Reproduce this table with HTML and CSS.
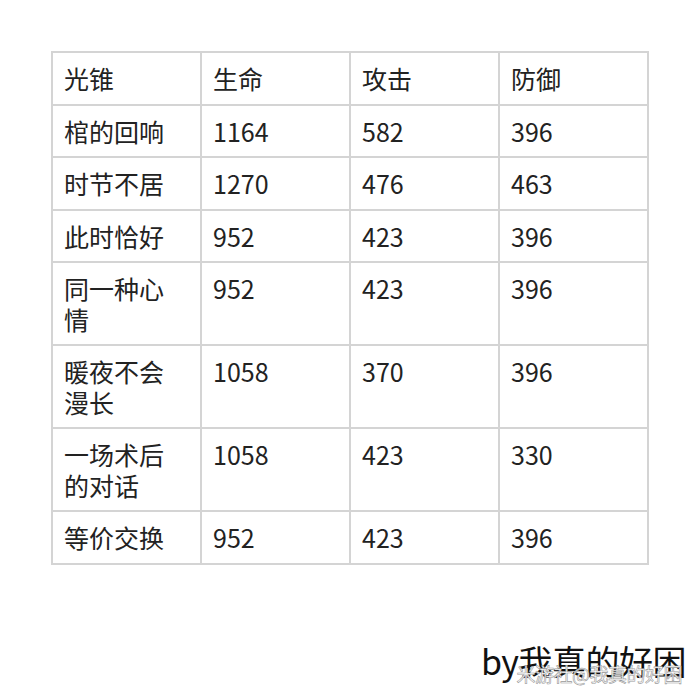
FILE: index.html
```html
<!DOCTYPE html>
<html lang="zh">
<head>
<meta charset="utf-8">
<link rel="stylesheet" href="styles.css">
</head>
<body>
<div class="page">
  <table class="stats">
    <tr><td>光锥</td><td>生命</td><td>攻击</td><td>防御</td></tr>
    <tr><td>棺的回响</td><td>1164</td><td>582</td><td>396</td></tr>
    <tr><td>时节不居</td><td>1270</td><td>476</td><td>463</td></tr>
    <tr><td>此时恰好</td><td>952</td><td>423</td><td>396</td></tr>
    <tr><td>同一种心情</td><td>952</td><td>423</td><td>396</td></tr>
    <tr><td>暖夜不会漫长</td><td>1058</td><td>370</td><td>396</td></tr>
    <tr><td>一场术后的对话</td><td>1058</td><td>423</td><td>330</td></tr>
    <tr><td>等价交换</td><td>952</td><td>423</td><td>396</td></tr>
  </table>
  <div class="footer">
    <span class="sign">by我真的好困</span>
    <span class="mark">米游社@我真的好困</span>
  </div>
</div>
</body>
</html>
```

FILE: styles.css
```css
html, body {
  margin: 0;
  padding: 0;
  background: #ffffff;
}
.page {
  width: 700px;
  height: 700px;
  box-sizing: border-box;
  padding-top: 51px;
  font-family: "Noto Sans CJK SC", "Noto Sans", sans-serif;
  color: #222222;
}
.stats {
  border-collapse: collapse;
  margin: 0 auto;
  width: 598px;
  table-layout: fixed;
}
.stats td {
  border: 2px solid #d4d4d4;
  padding: 10px 15px 10px 11px;
  font-size: 25px;
  line-height: 30.5px;
  vertical-align: top;
  word-break: break-all;
}
.footer {
  position: relative;
  text-align: right;
  padding-right: 14px;
  margin-top: 76px;
}
.sign {
  font-size: 34px;
  line-height: 40px;
  color: #111111;
  letter-spacing: -0.5px;
}
.mark {
  position: absolute;
  right: 18px;
  top: 22px;
  font-size: 19px;
  line-height: 22px;
  color: #ffffff;
  -webkit-text-stroke: 0.6px #999999;
  letter-spacing: -0.5px;
}
```
